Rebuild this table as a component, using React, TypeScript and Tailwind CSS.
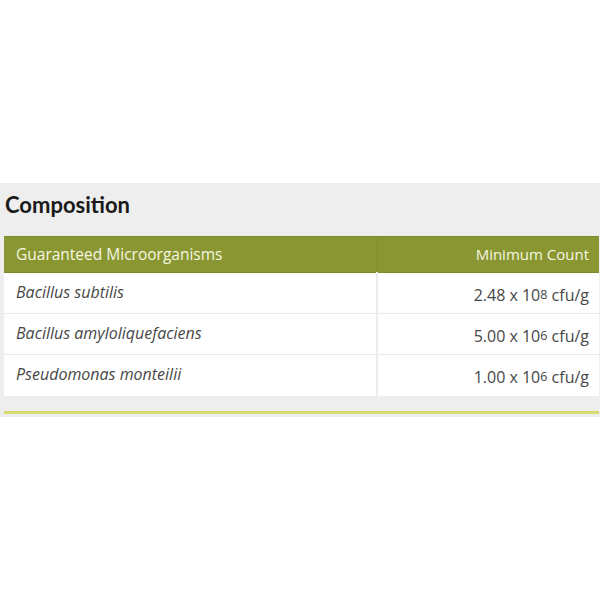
const rows = [
  { name: "Bacillus subtilis", base: "2.48 x 10", exp: "8" },
  { name: "Bacillus amyloliquefaciens", base: "5.00 x 10", exp: "6" },
  { name: "Pseudomonas monteilii", base: "1.00 x 10", exp: "6" },
];

export default function App() {
  return (
    <div className="w-[600px] h-[600px] bg-white pt-[183px] font-['Open_Sans',sans-serif]">
      <section className="bg-[#eeeeee] pl-[4px] pr-[1px] pb-[3px]">
        <h2 className="h-[53px] pl-[1px] pt-[9px] font-['Lato',sans-serif] text-[22px] font-bold text-[#1a1a1a] leading-[26px]">
          Composition
        </h2>
        <table className="w-full border-collapse">
          <thead>
            <tr className="h-[36px] bg-[#8a9632] text-[#f4f6e0]">
              <th className="w-[373px] border-y border-[#7d8a2a] border-r border-r-[#7e8b2c] pl-[12px] text-left text-[15.5px] font-normal">
                Guaranteed Microorganisms
              </th>
              <th className="border-y border-[#7d8a2a] pr-[10px] text-right text-[15px] font-normal">
                Minimum Count
              </th>
            </tr>
          </thead>
          <tbody className="bg-white text-[#474747]">
            {rows.map((r) => (
              <tr key={r.name} className="h-[41px] border-b border-[#e8e8e8] last:border-b-0">
                <td className="border-r-2 border-[#ececec] pl-[12px] text-[16px] italic align-middle pb-[2px]">
                  {r.name}
                </td>
                <td className="pr-[10px] text-right text-[16px] pt-[4px]">
                  {r.base}
                  <sup className="text-[12.5px] relative -top-[2px]">{r.exp}</sup> cfu/g
                </td>
              </tr>
            ))}
          </tbody>
        </table>
        <div className="mt-[15px] h-[3px] bg-[#d7db70]" />
      </section>
    </div>
  );
}
